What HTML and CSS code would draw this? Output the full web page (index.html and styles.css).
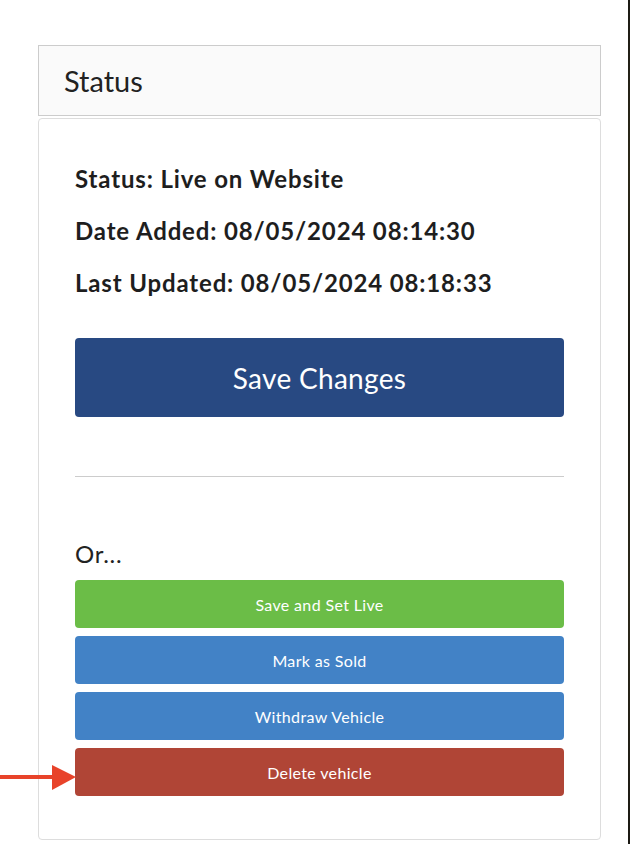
FILE: index.html
```html
<!DOCTYPE html>
<html>
<head>
<meta charset="utf-8">
<link rel="stylesheet" href="styles.css">
</head>
<body>
<div class="page">
  <div class="panel">
    <div class="panel-heading">Status</div>
    <div class="panel-body">
      <div class="info">
        <p class="info-line">Status: Live on Website</p>
        <p class="info-line">Date Added: 08/05/2024 08:14:30</p>
        <p class="info-line">Last Updated: 08/05/2024 08:18:33</p>
      </div>
      <button class="btn btn-save">Save Changes</button>
      <hr class="divider">
      <p class="or">Or...</p>
      <div class="actions">
        <button class="btn btn-sm btn-green">Save and Set Live</button>
        <button class="btn btn-sm btn-blue">Mark as Sold</button>
        <button class="btn btn-sm btn-blue">Withdraw Vehicle</button>
        <button class="btn btn-sm btn-red">Delete vehicle</button>
      </div>
    </div>
  </div>
  <div class="edge"></div>
</div>
<svg class="arrow" width="80" height="28" viewBox="0 0 80 28">
  <rect x="0" y="10" width="54" height="4" fill="#e8432a"/>
  <polygon points="52,0 76,12 52,25" fill="#e8432a"/>
</svg>
</body>
</html>
```

FILE: styles.css
```css
html, body {
  margin: 0;
  padding: 0;
  background: #ffffff;
}
body {
  font-family: Lato, "Open Sans", "Liberation Sans", sans-serif;
  color: #222222;
  width: 630px;
  height: 844px;
  overflow: hidden;
  position: relative;
}
.page {
  display: flex;
  height: 844px;
}
.panel {
  margin: 45px 0 0 38px;
  width: 563px;
  display: flex;
  flex-direction: column;
  gap: 2px;
}
.panel-heading {
  box-sizing: border-box;
  height: 71px;
  background: #fafafa;
  border: 1px solid #cccccc;
  padding: 0 25px;
  font-size: 29px;
  line-height: 69px;
  color: #222;
}
.panel-body {
  box-sizing: border-box;
  height: 722px;
  border: 1px solid #dddddd;
  border-radius: 4px;
  padding: 46px 36px 43px;
  display: flex;
  flex-direction: column;
}
.info {
  display: flex;
  flex-direction: column;
  gap: 24px;
}
.info-line {
  margin: 0;
  font-size: 24px;
  font-weight: 700;
  line-height: 28px;
  letter-spacing: 0.85px;
  color: #1e1e1e;
}
.btn {
  border: none;
  color: #ffffff;
  font-family: Lato, "Open Sans", "Liberation Sans", sans-serif;
  border-radius: 4px;
  width: 100%;
  padding: 0;
  cursor: pointer;
}
.btn-save {
  margin-top: 41px;
  height: 79px;
  background: #284982;
  font-size: 28px;
  letter-spacing: 0.3px;
}
.divider {
  margin: 59px 0 0;
  border: none;
  border-top: 1px solid #cccccc;
  height: 0;
}
.or {
  margin: 63px 0 0;
  font-size: 24px;
  line-height: 28px;
  letter-spacing: 0.7px;
  color: #222;
}
.actions {
  margin-top: 12px;
  display: flex;
  flex-direction: column;
  gap: 8px;
}
.btn-sm {
  height: 48px;
  font-size: 16px;
  letter-spacing: 0.35px;
}
.btn-green { background: #6bbd47; }
.btn-blue { background: #4282c6; }
.btn-red { background: #b04536; }
.edge {
  margin-left: auto;
  width: 2px;
  height: 844px;
  background: linear-gradient(180deg, #1c1a14 0%, #2d2a1a 20%, #1a1812 45%, #2e2b1c 70%, #1b1913 100%);
}
.arrow {
  position: absolute;
  left: 0;
  top: 765px;
}
```
